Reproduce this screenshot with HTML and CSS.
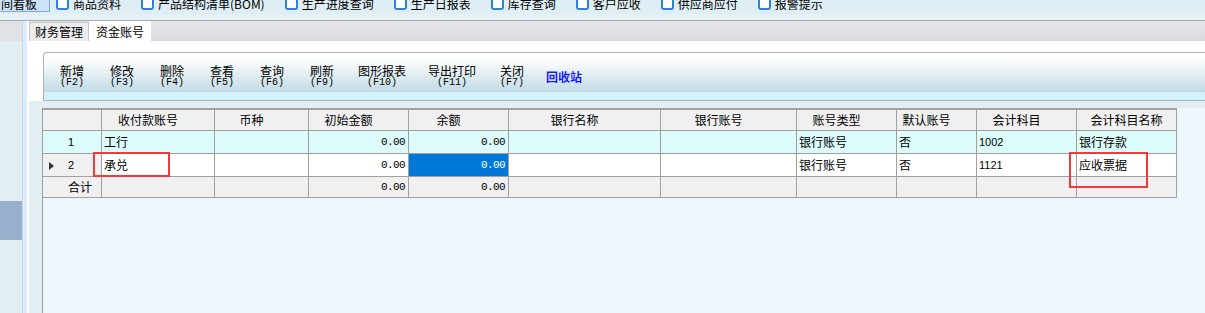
FILE: index.html
```html
<!DOCTYPE html>
<html lang="zh-CN">
<head>
    <meta charset="UTF-8">
    <title>资金账号</title>
    <link rel="stylesheet" href="styles.css">
</head>
<body>
    <!-- Quick menu -->
    <div class="topbar">
        <div class="menu-item active">间看板</div>
        <div class="menu-item"><span class="check"></span>商品资料</div>
        <div class="menu-item"><span class="check"></span>产品结构清单(BOM)</div>
        <div class="menu-item"><span class="check"></span>生产进度查询</div>
        <div class="menu-item"><span class="check"></span>生产日报表</div>
        <div class="menu-item"><span class="check"></span>库存查询</div>
        <div class="menu-item"><span class="check"></span>客户应收</div>
        <div class="menu-item"><span class="check"></span>供应商应付</div>
        <div class="menu-item"><span class="check"></span>报警提示</div>
    </div>

    <div class="main">
        <div class="sidebar">
            <div class="sidebar-head"></div>
            <div class="sidebar-item"></div>
        </div>
        <div class="splitter"></div>

        <div class="workspace">
            <div class="tabs">
                <div class="tab">财务管理</div>
                <div class="tab active">资金账号</div>
            </div>

            <div class="content">
                <div class="toolbar">
                    <div class="tool-btn">新增<span class="key">(F2)</span></div>
                    <div class="tool-btn">修改<span class="key">(F3)</span></div>
                    <div class="tool-btn">删除<span class="key">(F4)</span></div>
                    <div class="tool-btn">查看<span class="key">(F5)</span></div>
                    <div class="tool-btn">查询<span class="key">(F6)</span></div>
                    <div class="tool-btn">刷新<span class="key">(F9)</span></div>
                    <div class="tool-btn">图形报表<span class="key">(F10)</span></div>
                    <div class="tool-btn">导出打印<span class="key">(F11)</span></div>
                    <div class="tool-btn">关闭<span class="key">(F7)</span></div>
                    <div class="tool-btn recycle">回收站</div>
                </div>
            </div>

            <div class="grid-area">
                <div class="grid">
                    <table class="data-grid">
                        <colgroup>
                            <col style="width:59px">
                            <col style="width:113px">
                            <col style="width:94px">
                            <col style="width:100px">
                            <col style="width:100px">
                            <col style="width:152px">
                            <col style="width:136px">
                            <col style="width:100px">
                            <col style="width:80px">
                            <col style="width:100px">
                            <col style="width:100px">
                        </colgroup>
                        <thead>
                            <tr>
                                <th></th>
                                <th>收付款账号</th>
                                <th>币种</th>
                                <th>初始金额</th>
                                <th>余额</th>
                                <th>银行名称</th>
                                <th>银行账号</th>
                                <th>账号类型</th>
                                <th>默认账号</th>
                                <th>会计科目</th>
                                <th class="wide">会计科目名称</th>
                            </tr>
                        </thead>
                        <tbody>
                            <tr class="alt">
                                <td class="row-head">1</td>
                                <td>工行</td>
                                <td></td>
                                <td class="num">0.00</td>
                                <td class="num">0.00</td>
                                <td></td>
                                <td></td>
                                <td>银行账号</td>
                                <td>否</td>
                                <td class="code">1002</td>
                                <td>银行存款</td>
                            </tr>
                            <tr>
                                <td class="row-head"><span class="pointer"></span>2</td>
                                <td>承兑</td>
                                <td></td>
                                <td class="num">0.00</td>
                                <td class="num selected">0.00</td>
                                <td></td>
                                <td></td>
                                <td>银行账号</td>
                                <td>否</td>
                                <td class="code">1121</td>
                                <td>应收票据</td>
                            </tr>
                            <tr class="total">
                                <td class="row-head sum">合计</td>
                                <td></td>
                                <td></td>
                                <td class="num">0.00</td>
                                <td class="num">0.00</td>
                                <td></td>
                                <td></td>
                                <td></td>
                                <td></td>
                                <td></td>
                                <td></td>
                            </tr>
                        </tbody>
                    </table>

                    <!-- highlight marks -->
                    <div class="mark mark-account"></div>
                    <div class="mark mark-subject"></div>
                </div>
            </div>
        </div>
    </div>
</body>
</html>
```

FILE: styles.css
```css
body {
    margin: 0;
    width: 1205px;
    height: 313px;
    overflow: hidden;
    background: #e2eef4;
    font-family: "Noto Sans CJK SC", sans-serif;
    font-size: 12px;
    color: #000;
}
.topbar {
    height: 20px;
    border-bottom: 1px solid #a3abb3;
    background: linear-gradient(#dfedf4 0, #dfedf4 70%, #e6f1f5 70%);
    display: flex;
    align-items: flex-start;
    overflow: hidden;
}
.menu-item {
    display: flex;
    align-items: center;
    margin-top: -5px;
    height: 17px;
    line-height: 17px;
    margin-right: 20px;
    white-space: nowrap;
}
.menu-item.active {
    margin-left: -12px;
    margin-right: 6px;
    padding: 0 12px;
    border: 1px solid #7fa8d2;
    background: #cde3f5;
    box-sizing: border-box;
}
.check {
    width: 9px;
    height: 9px;
    border: 2px solid #2f82d6;
    border-radius: 3px;
    background: #fff;
    margin-right: 4px;
}
.main {
    display: flex;
    height: 292px;
}
.sidebar {
    width: 22px;
    border-right: 1px solid #c6dce7;
    background: #e3eef3;
    display: flex;
    flex-direction: column;
}
.sidebar-head {
    height: 20px;
    background: #e0e2e6;
}
.sidebar-item {
    height: 39px;
    margin-top: 160px;
    background: #97b0cc;
}
.splitter {
    width: 4px;
    background: #dcecfa;
    border-right: 2px solid #fff;
}
.workspace {
    flex: 1;
    display: flex;
    flex-direction: column;
}
.tabs {
    height: 20px;
    background: linear-gradient(#e6e6ea, #d9dadf);
    display: flex;
    align-items: flex-end;
}
.tab {
    height: 19px;
    line-height: 18px;
    padding: 0 5px;
    background: #ececec;
    border: 1px solid #c9c9c9;
    border-bottom: none;
    box-sizing: border-box;
}
.tab.active {
    height: 20px;
    line-height: 21px;
    padding: 0 7px;
    background: #fff;
    border: none;
}
.content {
    background: #fff;
    padding: 11px 0 0 14px;
}
.toolbar {
    height: 49px;
    box-sizing: border-box;
    border: 1px solid #a9b5bd;
    border-right: none;
    border-top-left-radius: 4px;
    background: linear-gradient(#fff 0%, #f7fafb 22%, #c5dde6 78%, #c0dae4 82%, #d3f1fb 84%, #d3f1fb 100%);
    display: flex;
    align-items: center;
    padding-left: 3px;
}
.tool-btn {
    min-width: 50px;
    padding: 0 11px;
    box-sizing: border-box;
    text-align: center;
    line-height: 12px;
    white-space: nowrap;
}
.tool-btn .key {
    display: block;
    font-family: "Liberation Mono", monospace;
    font-size: 10px;
}
.tool-btn.recycle {
    color: #1a1aff;
    font-weight: bold;
    padding: 0 9px;
}
.grid-area {
    flex: 1;
    background: #e3eef2;
    padding: 7px 0 0 13px;
}
.grid {
    position: relative;
    height: 100%;
    background: #eef6fe;
    border-left: 1px solid #a0a0a0;
}
.data-grid {
    border-collapse: separate;
    border-spacing: 0;
    table-layout: fixed;
    width: 1134px;
    border-top: 2px solid #a0a0a0;
}
.data-grid th, .data-grid td {
    border-right: 1px solid #a0a0a0;
    border-bottom: 1px solid #a0a0a0;
    white-space: nowrap;
    overflow: hidden;
}
.data-grid th {
    background: #f0f0f0;
    font-weight: normal;
    line-height: 20px;
    padding: 0 20px 0 0;
    text-align: center;
}
.data-grid th.wide {
    padding: 0;
}
.data-grid td {
    line-height: 22px;
    padding: 0 2px;
    background: #fff;
}
.data-grid tr.alt td {
    background: #dcfcfc;
}
.data-grid tr.total td {
    background: #f0f0f0;
    line-height: 20px;
}
.data-grid td.row-head {
    background: #f0f0f0;
    padding-left: 25px;
    font-family: "Liberation Sans", sans-serif;
    font-size: 11px;
}
.data-grid td.row-head.sum {
    font-family: "Noto Sans CJK SC", sans-serif;
    font-size: 12px;
}
.data-grid td.num {
    text-align: right;
    padding-right: 3px;
    font-family: "Liberation Mono", monospace;
    font-size: 11px;
    letter-spacing: -0.6px;
}
.data-grid td.selected {
    background: #0078d7;
    color: #fff;
}
.data-grid td.code {
    font-family: "Liberation Sans", sans-serif;
    font-size: 11px;
}
.pointer {
    display: inline-block;
    vertical-align: middle;
    border-left: 5px solid #333;
    border-top: 4px solid transparent;
    border-bottom: 4px solid transparent;
    margin-left: -19px;
    margin-right: 14px;
}
.mark {
    position: absolute;
    top: 44px;
    border: 2px solid #f23a3a;
    box-sizing: border-box;
}
.mark-account {
    left: 50px;
    width: 77px;
    height: 25px;
}
.mark-subject {
    left: 1026px;
    width: 79px;
    height: 36px;
}
```
